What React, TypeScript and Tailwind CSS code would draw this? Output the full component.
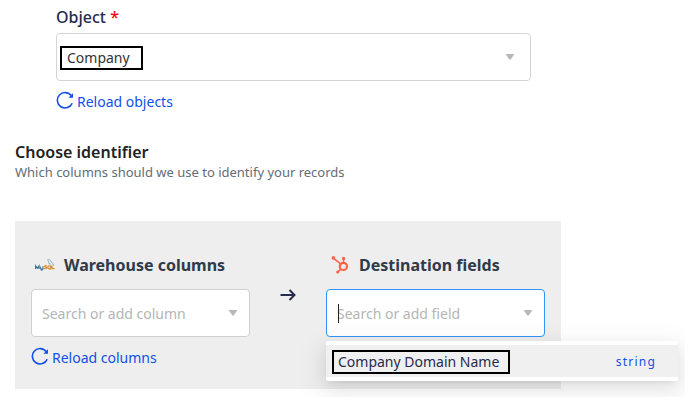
import type { ReactNode } from 'react';

function Caret() {
  return (
    <svg aria-hidden="true" viewBox="0 0 10 6" className="pointer-events-none h-[6px] w-[10px] shrink-0" fill="#b8b8b8">
      <path d="M.5 0h9L5.6 5.4q-.6.8-1.2 0z" />
    </svg>
  );
}

function ReloadButton({ children }: { children: ReactNode }) {
  return (
    <button type="button" className="mt-[9px] flex h-6 items-center gap-[3px] text-sm text-[#1150e6]">
      <svg aria-hidden="true" viewBox="0 0 18 18" className="-mt-1 size-[18px]" fill="none" stroke="currentColor" strokeWidth="1.6">
        <path d="M15.2 4.6A7.7 7.7 0 1 0 16.2 12.2" />
        <path d="M17 2.2v4.6h-4.6z" fill="currentColor" stroke="none" />
      </svg>
      {children}
    </button>
  );
}

function MySqlLogo() {
  return (
    <svg aria-hidden="true" viewBox="0 0 20 12" className="mx-1 h-3 w-5" fill="none">
      <g stroke="#35708f" strokeWidth="1.1">
        <path d="M.6 10V6.8l1.7 2.5L4 6.8V10" />
        <path d="M5.3 7.4v1.8q0 .9 1 .8l1.3-.2M7.9 7.2v2.6q0 1.4-2 1.3" />
      </g>
      <g stroke="#dc8a28" strokeWidth="1.2">
        <path d="M11.8 6.8q-2.4-.4-2.3.6c.1 1 2.3.5 2.2 1.6-.1.9-1.5.8-2.7.7" />
        <path d="M14.6 6.8c-2.4-.2-2.4 3-.2 3s2.2-3 .2-3zM14.5 9l1.3 1.4M17 6.5v3.2h2.6" />
      </g>
      <path d="M12.4.8c1.8-.8 3.2.4 3.9 2.1.5 1.3 1.9 1.8 2.8 3l-1.6.1M12.6 1l1.2 1.8.3 2.4.9-.8 1 1.4" stroke="#7aa5ba" strokeWidth=".8" />
    </svg>
  );
}

function HubSpotLogo() {
  return (
    <svg aria-hidden="true" viewBox="0 0 18 18" className="mx-[5px] size-[18px]" fill="none" stroke="#ff6448">
      <circle cx="12.4" cy="10.4" r="3.6" strokeWidth="2.2" />
      <path d="M12.6 6.5V3M9.6 7.8 2.4 2.2M9.8 13.1 7 15.8" strokeWidth="1.5" />
      <g fill="#ff6448" stroke="none">
        <circle cx="12.6" cy="2.4" r="1.7" />
        <circle cx="2.4" cy="1.9" r="1.8" />
        <circle cx="6.7" cy="16" r="1.6" />
      </g>
    </svg>
  );
}

export default function App() {
  return (
    <main className="mr-[5px] overflow-hidden bg-white pt-[5px] pb-2 pl-[15px] font-['Noto_Sans','Open_Sans',sans-serif] text-[#252b4d]">
      <section className="ml-[41px] max-w-[475px]">
        <label htmlFor="object" className="block text-base leading-6 font-medium">
          Object <span className="text-[#ff0018]">*</span>
        </label>
        <div className="relative mt-1 flex h-12 items-center rounded-[4px] border border-[#d4d4d4] bg-white pr-[15px]">
          <select id="object" className="h-full min-w-0 flex-1 appearance-none bg-transparent pt-0.5 pl-[10px] text-sm text-[#333] outline-none">
            <option>Company</option>
          </select>
          <Caret />
          <span className="pointer-events-none absolute top-3 left-[3px] h-6 w-[83px] border-2 border-black" />
        </div>
        <ReloadButton>Reload objects</ReloadButton>
      </section>

      <section className="mt-7">
        <h2 className="text-base leading-5 font-semibold text-[#222]">Choose identifier</h2>
        <p className="text-[13px] leading-5 text-[#626d78]">Which columns should we use to identify your records</p>

        <div className="mt-[39px] grid max-w-[546px] grid-cols-[minmax(0,1fr)_76px_minmax(0,1fr)] bg-[#eee] px-4 pt-8 pb-[19px]">
          <div>
            <label htmlFor="column" className="flex h-6 items-center gap-[5px] text-base font-bold whitespace-nowrap text-[#303a4b]">
              <MySqlLogo />
              Warehouse columns
            </label>
            <div className="mt-3 flex h-12 items-center rounded-[4px] border border-[#d0d0d0] bg-white pr-[11px]">
              <input id="column" placeholder="Search or add column" className="h-full min-w-0 flex-1 pl-[10px] text-sm outline-none placeholder:text-[#b5b5b5]" />
              <Caret />
            </div>
            <ReloadButton>Reload columns</ReloadButton>
          </div>

          <div className="flex justify-center pt-[34px]">
            <svg aria-hidden="true" viewBox="0 0 16 16" className="size-4" fill="none" stroke="#252b4d" strokeWidth="2">
              <path d="M.5 8H15M9.5 3l5 5-5 5" />
            </svg>
          </div>

          <div>
            <label htmlFor="field" className="flex h-6 items-center gap-[5px] text-base font-bold whitespace-nowrap text-[#303a4b]">
              <HubSpotLogo />
              Destination fields
            </label>
            <div className="relative mt-3 flex h-12 items-center rounded-[4px] border border-[#3295f8] bg-white pr-[11px]">
              <input id="field" placeholder="Search or add field" className="h-full min-w-0 flex-1 pl-[10px] text-sm outline-none placeholder:text-[#b5b5b5]" />
              <Caret />
              <span className="pointer-events-none absolute top-[14px] left-[11px] h-[19px] w-px bg-[#222]" />
              <div role="listbox" className="absolute top-[51px] -left-px w-[352px] rounded-[2px] bg-white py-1 shadow-[0_3px_6px_-4px_rgba(0,0,0,0.12),0_6px_16px_0_rgba(0,0,0,0.08),0_9px_28px_8px_rgba(0,0,0,0.05)]">
                <button type="button" role="option" aria-selected="true" className="flex h-8 w-full items-center justify-between bg-[#f0f0f0] pt-0.5 pr-[22px] pl-[6px]">
                  <span className="flex h-6 w-[178px] items-center border-2 border-black pl-1 text-sm">Company Domain Name</span>
                  <span className="text-xs tracking-widest text-[#1150e6]">string</span>
                </button>
              </div>
            </div>
          </div>
        </div>
      </section>
    </main>
  );
}
